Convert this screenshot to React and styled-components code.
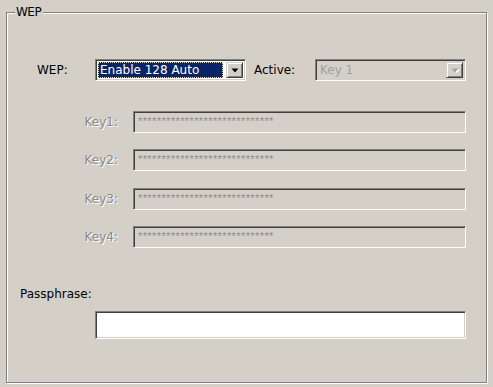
import React from "react";
import styled, { createGlobalStyle } from "styled-components";

const Global = createGlobalStyle`
  html, body { margin: 0; padding: 0; background: #d4d0c8; }
  body { font-family: "DejaVu Sans", Verdana, sans-serif; font-size: 12px; color: #000; }
  * { box-sizing: border-box; }
`;

const Page = styled.div`
  width: 493px;
  height: 387px;
  display: flex;
  padding: 12px 6px 4px 6px;
  background: #d4d0c8;
`;

const Frame = styled.div`
  position: relative;
  flex: 1;
  border: 1px solid #808080;
  box-shadow: inset 1px 1px 0 #fff, 1px 1px 0 #fff;
  display: flex;
  flex-direction: column;
  padding: 46px 0 0 0;
`;

const Legend = styled.div`
  position: absolute;
  top: -8px;
  left: 8px;
  padding: 0 2px 0 1px;
  background: #d4d0c8;
  line-height: 14px;
  letter-spacing: -0.5px;
`;

const Row = styled.div`
  display: flex;
  align-items: center;
  height: ${(p) => p.$h || 22}px;
  margin-top: ${(p) => p.$mt || 0}px;
  padding-left: ${(p) => p.$pl || 0}px;
`;

const Label = styled.div`
  width: ${(p) => p.$w}px;
  margin-left: ${(p) => p.$ml || 0}px;
  text-align: ${(p) => p.$align || "left"};
  padding-right: ${(p) => p.$pr || 0}px;
  color: ${(p) => (p.$disabled ? "#8a8a8a" : "#000")};
  text-shadow: ${(p) => (p.$disabled ? "1px 1px 0 #fff" : "none")};
  white-space: nowrap;
  flex: none;
`;

const Sunken = styled.div`
  width: ${(p) => p.$w}px;
  height: ${(p) => p.$h || 22}px;
  flex: none;
  display: flex;
  border: 1px solid;
  border-color: #808080 #fff #fff #808080;
  box-shadow: inset 1px 1px 0 #404040, inset -1px -1px 0 #d4d0c8;
  background: ${(p) => (p.$disabled ? "#d4d0c8" : "#fff")};
  padding: 2px;
`;

const ComboValue = styled.div`
  flex: 1;
  display: flex;
  align-items: center;
  padding-left: 2px;
  margin-right: 3px;
  color: ${(p) => (p.$selected ? "#fff" : p.$disabled ? "#a0a0a0" : "#000")};
  background: ${(p) => (p.$selected ? "#0a246a" : "transparent")};
  outline: ${(p) => (p.$selected ? "1px dotted #e8dc9a" : "none")};
  outline-offset: -1px;
  white-space: nowrap;
  overflow: hidden;
`;

const DropButton = styled.div`
  width: 17px;
  flex: none;
  display: flex;
  align-items: center;
  justify-content: center;
  background: #d4d0c8;
  border: 1px solid;
  border-color: #d4d0c8 #404040 #404040 #d4d0c8;
  box-shadow: inset 1px 1px 0 #fff, inset -1px -1px 0 #808080;
`;

const Arrow = ({ disabled }) => (
  <svg width="8" height="5" viewBox="0 0 8 5">
    {disabled && <polygon points="2,1 9,1 5.5,5" fill="#fff" />}
    <polygon points="0.5,0.5 7.5,0.5 4,4.5" fill={disabled ? "#a0a0a0" : "#000"} />
  </svg>
);

const Stars = styled.div`
  display: flex;
  align-items: center;
  padding-left: 2px;
  color: #8c8c8c;
  font-family: "Liberation Sans", Arial, sans-serif;
  font-size: 11px;
  letter-spacing: 0.4px;
  margin-top: -2px;
  white-space: nowrap;
  overflow: hidden;
`;

const PassLabel = styled.div`
  margin-top: 39px;
  padding-left: 13px;
  line-height: 14px;
`;

const keys = ["Key1:", "Key2:", "Key3:", "Key4:"];
const STARS = "*".repeat(29);

export default function App() {
  return (
    <>
      <Global />
      <Page>
        <Frame>
          <Legend>WEP</Legend>
          <Row>
            <Label $w={58} $ml={30}>WEP:</Label>
            <Sunken $w={151}>
              <ComboValue $selected>Enable 128 Auto</ComboValue>
              <DropButton>
                <Arrow />
              </DropButton>
            </Sunken>
            <Label $w={61} $ml={8}>Active:</Label>
            <Sunken $w={151} $disabled>
              <ComboValue $disabled>Key 1</ComboValue>
              <DropButton>
                <Arrow disabled />
              </DropButton>
            </Sunken>
          </Row>
          {keys.map((k, i) => (
            <Row key={k} $mt={i === 0 ? 30 : i === 2 ? 17 : 16}>
              <Label $w={126} $align="right" $pr={15} $disabled>
                {k}
              </Label>
              <Sunken $w={333} $disabled>
                <Stars>{STARS}</Stars>
              </Sunken>
            </Row>
          ))}
          <PassLabel>Passphrase:</PassLabel>
          <Row $mt={10} $h={28} $pl={88}>
            <Sunken $w={371} $h={28} />
          </Row>
        </Frame>
      </Page>
    </>
  );
}
